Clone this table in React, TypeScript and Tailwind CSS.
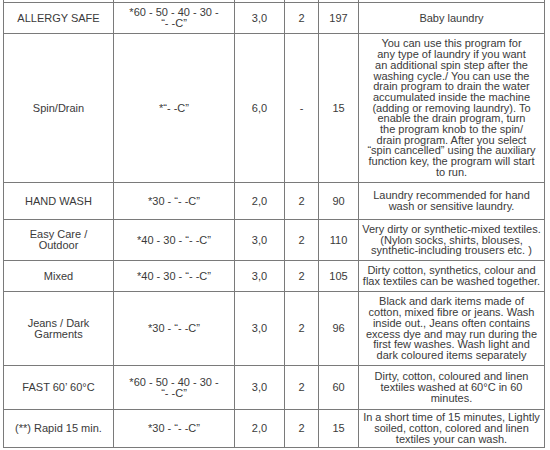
import React from "react";

type Row = {
  name: string[];
  temp: string[];
  load: string;
  spin: string;
  time: string;
  desc: string[];
};

const rows: Row[] = [
  {
    name: ["ALLERGY SAFE"],
    temp: ["*60 - 50 - 40 - 30 -", "“- -C”"],
    load: "3,0",
    spin: "2",
    time: "197",
    desc: ["Baby laundry"],
  },
  {
    name: ["Spin/Drain"],
    temp: ["*“- -C”"],
    load: "6,0",
    spin: "-",
    time: "15",
    desc: [
      "You can use this program for",
      "any type of laundry if you want",
      "an additional spin step after the",
      "washing cycle./ You can use the",
      "drain program to drain the water",
      "accumulated inside the machine",
      "(adding or removing laundry). To",
      "enable the drain program, turn",
      "the program knob to the spin/",
      "drain program. After you select",
      "“spin cancelled” using the auxiliary",
      "function key, the program will start",
      "to run.",
    ],
  },
  {
    name: ["HAND WASH"],
    temp: ["*30 - “- -C”"],
    load: "2,0",
    spin: "2",
    time: "90",
    desc: ["Laundry recommended for hand", "wash or sensitive laundry."],
  },
  {
    name: ["Easy Care /", "Outdoor"],
    temp: ["*40 - 30 - “- -C”"],
    load: "3,0",
    spin: "2",
    time: "110",
    desc: [
      "Very dirty or synthetic-mixed textiles.",
      "(Nylon socks, shirts, blouses,",
      "synthetic-including trousers etc. )",
    ],
  },
  {
    name: ["Mixed"],
    temp: ["*40 - 30 - “- -C”"],
    load: "3,0",
    spin: "2",
    time: "105",
    desc: [
      "Dirty cotton, synthetics, colour and",
      "flax textiles can be washed together.",
    ],
  },
  {
    name: ["Jeans / Dark", "Garments"],
    temp: ["*30 - “- -C”"],
    load: "3,0",
    spin: "2",
    time: "96",
    desc: [
      "Black and dark items made of",
      "cotton, mixed fibre or jeans. Wash",
      "inside out., Jeans often contains",
      "excess dye and may run during the",
      "first few washes. Wash light and",
      "dark coloured items separately",
    ],
  },
  {
    name: ["FAST 60’ 60°C"],
    temp: ["*60 - 50 - 40 - 30 -", "“- -C”"],
    load: "3,0",
    spin: "2",
    time: "60",
    desc: [
      "Dirty, cotton, coloured and linen",
      "textiles washed at 60°C in 60",
      "minutes.",
    ],
  },
  {
    name: ["(**) Rapid 15 min."],
    temp: ["*30 - “- -C”"],
    load: "2,0",
    spin: "2",
    time: "15",
    desc: [
      "In a short time of 15 minutes, Lightly",
      "soiled, cotton, colored and linen",
      "textiles your can wash.",
    ],
  },
];

function Cell({ lines }: { lines: string[] }) {
  return (
    <div className="bg-white flex flex-col items-center justify-center text-center px-[1px]">
      {lines.map((l, i) => (
        <span key={i} className="whitespace-nowrap">
          {l}
        </span>
      ))}
    </div>
  );
}

export default function App() {
  return (
    <div className="w-[550px] h-[450px] overflow-hidden bg-white">
      <div
        className="ml-[3px] mt-[-10px] w-[542px] grid gap-px p-px bg-[#7a7a7a] text-[11px] leading-[10.7px] text-[#3a3a3a] grid-cols-[109px_120px_49px_33px_39px_185px] grid-rows-[11px_30px_148px_36px_40px_30px_73px_43px_37px]"
        style={{ fontFamily: '"Liberation Sans", Arial, sans-serif' }}
      >
        <div className="bg-white" />
        <div className="bg-white" />
        <div className="bg-white" />
        <div className="bg-white" />
        <div className="bg-white" />
        <div className="bg-white" />
        {rows.map((r, i) => (
          <React.Fragment key={i}>
            <Cell lines={r.name} />
            <Cell lines={r.temp} />
            <Cell lines={[r.load]} />
            <Cell lines={[r.spin]} />
            <Cell lines={[r.time]} />
            <Cell lines={r.desc} />
          </React.Fragment>
        ))}
      </div>
    </div>
  );
}
